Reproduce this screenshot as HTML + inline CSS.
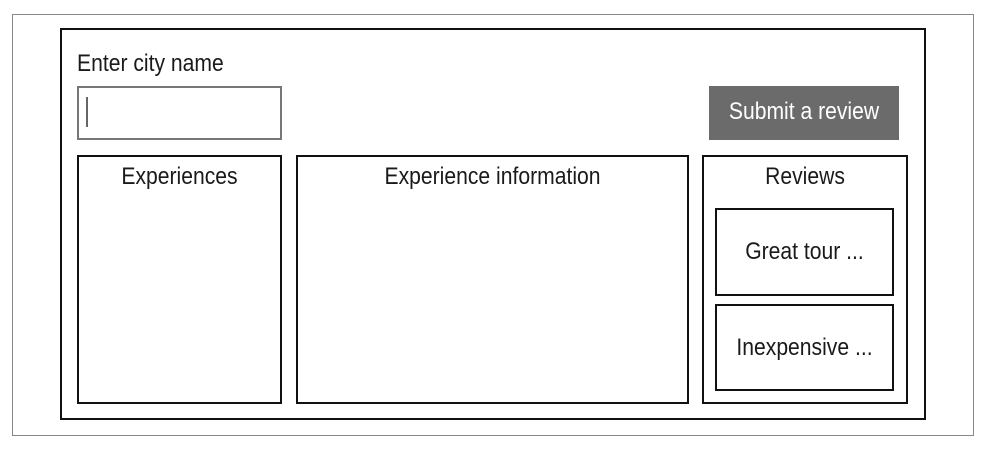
<!DOCTYPE html>
<html><head><meta charset="utf-8"><style>
html,body{margin:0;padding:0;background:#fff;width:984px;height:450px;overflow:hidden;position:relative;font-family:"Liberation Sans","DejaVu Sans",sans-serif;color:#1a1a1a}
.a{position:absolute;box-sizing:border-box}
.t{position:absolute;white-space:nowrap;font-size:24px;transform:scaleX(0.88);line-height:1}
.c{left:0;right:0;text-align:center}
</style></head><body>
<div class="a" style="left:12px;top:14px;width:962px;height:422px;border:1px solid #888"></div>
<div class="a" style="left:60px;top:28px;width:866px;height:392px;border:2px solid #111"></div>
<div class="t" style="left:77px;top:52px;transform-origin:left top">Enter city name</div>
<div class="a" style="left:77px;top:86px;width:205px;height:54px;border:2px solid #777"></div>
<div class="a" style="left:86px;top:97px;width:2px;height:30px;background:#666"></div>
<div class="a" style="left:709px;top:86px;width:190px;height:54px;background:#6b6b6b"></div>
<div class="t" style="left:709px;width:190px;top:100px;text-align:center;color:#fff">Submit a review</div>
<div class="a" style="left:77px;top:155px;width:205px;height:249px;border:2px solid #111"><div class="t c" style="top:8px">Experiences</div></div>
<div class="a" style="left:296px;top:155px;width:393px;height:249px;border:2px solid #111"><div class="t c" style="top:8px">Experience information</div></div>
<div class="a" style="left:702px;top:155px;width:206px;height:249px;border:2px solid #111"><div class="t c" style="top:8px">Reviews</div></div>
<div class="a" style="left:715px;top:208px;width:179px;height:88px;border:2px solid #111"><div class="t c" style="top:30px">Great tour ...</div></div>
<div class="a" style="left:715px;top:304px;width:179px;height:87px;border:2px solid #111"><div class="t c" style="top:30px">Inexpensive ...</div></div>
</body></html>
